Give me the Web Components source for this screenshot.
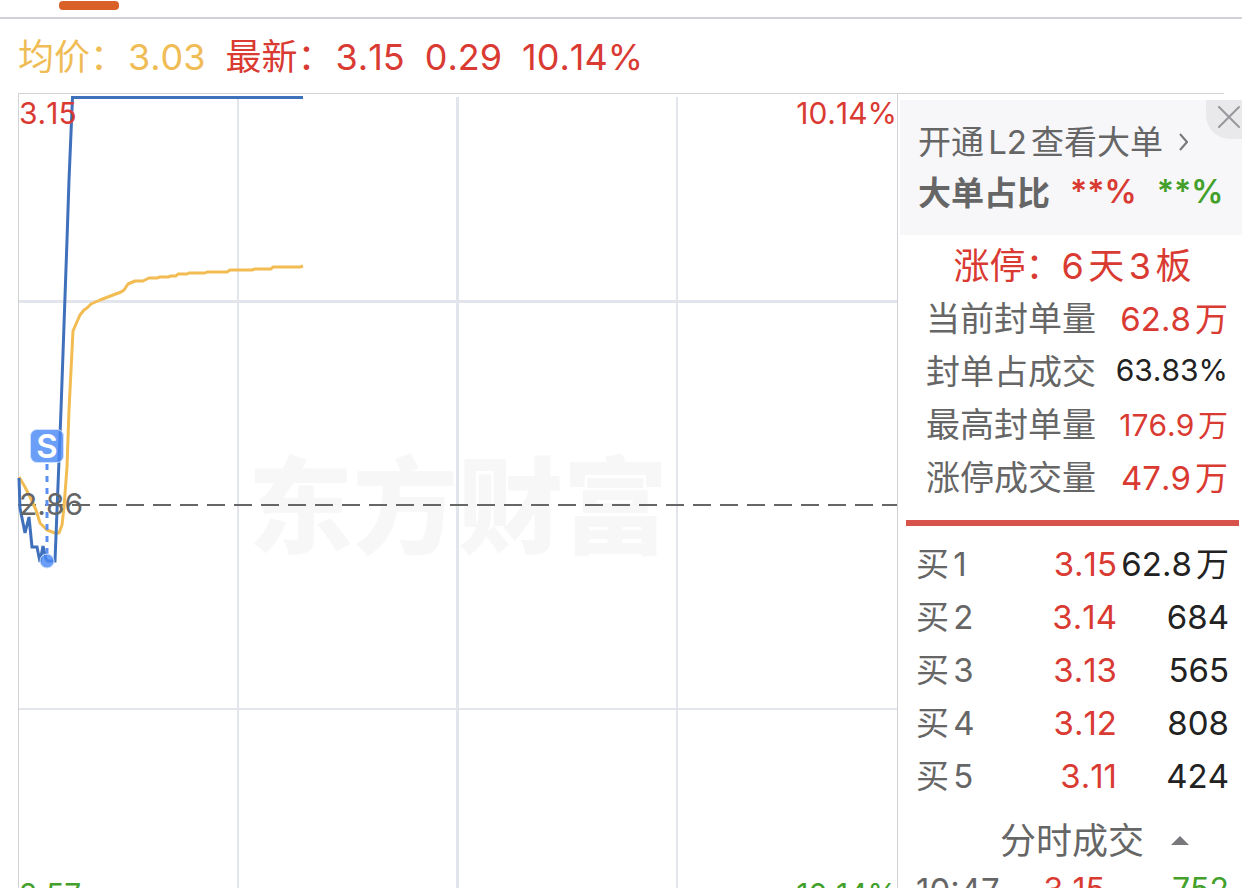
<!DOCTYPE html>
<html lang="zh-CN">
<head>
<meta charset="utf-8">
<title>分时行情</title>
<style>
  :root {
    --up: #d93a32;
    --down: #43a02a;
    --avg: #f0bc55;
    --ink: #222;
    --muted: #666;
    --line: #d1d1d6;
  }
  body {
    margin: 0;
    background: #fff;
    color: var(--ink);
    font-family: Inter, "Noto Sans CJK SC", sans-serif;
    font-kerning: none;
    text-autospace: normal;
  }
</style>
</head>
<body>
<stock-page></stock-page>

<template id="stock-page">
  <style>
    :host { display: flex; flex-direction: column; height: 100vh; overflow: hidden; }
    .tabs { box-sizing: border-box; flex: none; height: 19px; padding: 1px 59px 0; border-bottom: 2px solid var(--line); }
    .tabs i { display: block; width: 60px; height: 9px; border-radius: 4px; background: #d96027; }
    .rule { flex: none; height: 1px; margin: 0 18px; background: var(--line); }
    main { display: flex; align-items: flex-start; padding-left: 18px; }
    time-chart { flex: 1; }
    aside { flex: none; width: 344px; }
  </style>
  <div class="tabs"><i></i></div>
  <quote-bar></quote-bar>
  <div class="rule"></div>
  <main>
    <time-chart>
      <span slot="high">3.15</span>
      <span slot="high-rate">10.14%</span>
      <span slot="base">2.86</span>
      <span slot="low">2.57</span>
      <span slot="low-rate">10.14%</span>
    </time-chart>
    <aside>
      <level-promo></level-promo>
      <limit-stats></limit-stats>
      <order-book></order-book>
      <trade-list></trade-list>
    </aside>
  </main>
</template>

<template id="quote-bar">
  <style>
    :host { display: flex; box-sizing: border-box; flex: none; align-items: center; gap: 20px; height: 74px; padding: 2px 0 0 18px; font-size: 36px; line-height: 40px; color: var(--up); white-space: nowrap; }
    span { display: flex; gap: 2px; }
    .avg { color: var(--avg); }
  </style>
  <span class="avg"><span>均价：</span><span>3.03</span></span><span><span>最新：</span><span>3.15</span></span><span>0.29</span><span>10.14%</span>
</template>

<template id="time-chart">
  <style>
    :host { display: grid; position: relative; padding-top: 3px; border: solid var(--line); border-width: 0 1px; font-size: 30px; line-height: 30px; }
    svg, .mark, .label { grid-area: 1 / 1; }
    svg { display: block; width: 100%; height: 816px; overflow: visible; }
    .mark { place-self: center; padding-top: 4px; font-size: 105px; line-height: 120px; font-weight: 900; color: #f7f7f7; white-space: nowrap; }
    .label { padding: 1px 0 4px; }
    .top { align-self: start; color: var(--up); }
    .mid { align-self: center; color: var(--muted); }
    .bottom { align-self: end; color: var(--down); }
    .right { justify-self: end; }
    trade-marker { position: absolute; left: 11px; top: 335px; }
  </style>
  <div class="mark">东方财富</div>
  <svg viewBox="19 97 878 816" preserveAspectRatio="none" fill="none" stroke-linejoin="round" aria-hidden="true">
    <g stroke="#e3e5ed">
      <path stroke-width="2" d="M238 97V913M677 97V913M19 709H897"/>
      <path stroke-width="3" d="M457.500 97V913M19 301.500H897"/>
    </g>
    <path stroke="#666" stroke-width="2" stroke-dasharray="18 9" d="M18 505H897"/>
    <path stroke="#f2bc52" stroke-width="3" d="M19 477L25 487L30 497L36 510L40 523L47 530L55 533L59 533L62 525L64 507L67 467L69 410L73 331L76 324L80 315L84 310L87 308L91 304L100 300L121 292L124 290L128 284L135 281L143 281L149 278L157 278L160 277L168 277L171 276L176 276L178 274L187 274L189 273L205 273L207 272L227 272L230 270L252 270L255 269L271 269L273 267L300 267L303 266"/>
    <path stroke="#3f70bb" stroke-width="3" stroke-linejoin="miter" d="M19 478L20 508L25 533L29 517L32 547L37 547L40 562L43 546L46 559L48 561L55 561L61 410L67 240L69 180L72.500 97.500L303 97.500"/>
  </svg>
  <div class="label top"><slot name="high"></slot></div>
  <div class="label top right"><slot name="high-rate"></slot></div>
  <div class="label mid"><slot name="base"></slot></div>
  <div class="label bottom"><slot name="low"></slot></div>
  <div class="label bottom right"><slot name="low-rate"></slot></div>
  <trade-marker>S</trade-marker>
</template>

<template id="trade-marker">
  <style>
    :host { display: flex; flex-direction: column; align-items: center; width: 34px; }
    b { box-sizing: border-box; width: 34px; height: 34px; border: 1px solid #cfe0fd; border-radius: 7px; background: rgba(74, 137, 245, .82); color: #fff; font-size: 33px; line-height: 32px; font-weight: 600; text-align: center; }
    svg { display: block; }
  </style>
  <b><slot></slot></b>
  <svg width="34" height="106" viewBox="0 0 34 106" fill="none" aria-hidden="true">
    <path d="M17 1V91" stroke="#5b8ff2" stroke-width="3" stroke-dasharray="6 6"/>
    <circle cx="17" cy="98" r="7" fill="#4a89f5" fill-opacity=".82" stroke="#cfe0fd"/>
  </svg>
</template>

<template id="level-promo">
  <style>
    :host { display: block; position: relative; box-sizing: border-box; height: 135px; margin: 6px 0 0 2px; padding: 15px 18px 0; background: #f7f7fa; color: var(--muted); font-size: 33px; white-space: nowrap; }
    a { display: flex; align-items: center; gap: 16px; height: 50px; color: inherit; text-decoration: none; }
    p { display: flex; align-items: center; gap: 20px; height: 52px; margin: 0; font-weight: 600; }
    strong { font-weight: 700; }
    p span { font-size: 32px; }
    .up { color: var(--up); }
    .down { color: var(--down); }
    button { position: absolute; top: 0; right: 0; width: 36px; height: 39px; padding: 6px 2px 0 12px; border: 0; border-radius: 0 0 0 24px; background: #e9e9eb; }
    svg { display: block; }
    a svg { padding-top: 4px; }
  </style>
  <a href="#level2">开通L2查看大单<svg width="9" height="18" viewBox="0 0 9 18" fill="none" stroke="#777" stroke-width="2" aria-hidden="true"><path d="M1 1L8 9L1 17"/></svg></a>
  <p><strong>大单占比</strong><span class="up">**%</span><span class="down">**%</span></p>
  <button type="button" aria-label="关闭"><svg width="22" height="33" viewBox="0 0 22 33" fill="none" stroke="#98989c" stroke-width="2" stroke-linecap="round" aria-hidden="true"><path d="M1 1L21 21M21 1L1 21"/></svg></button>
</template>

<template id="limit-stats">
  <style>
    :host { display: block; padding: 4px 3px 11px 8px; white-space: nowrap; }
    h2 { margin: 0; height: 51px; font-size: 36px; line-height: 54px; font-weight: 400; color: var(--up); text-align: center; }
    dl { margin: 0; padding: 0 11px 0 20px; }
    div { display: flex; align-items: center; justify-content: space-between; height: 53px; }
    dt { color: var(--muted); font-size: 34px; }
    dd { margin: 0; font-size: 33px; color: var(--up); }
    .small { font-size: 30px; }
    .plain { color: var(--ink); }
    hr { height: 6px; margin: 18px 0 0; border: 0; background: #d9534d; }
  </style>
  <h2>涨停：6天3板</h2>
  <dl>
    <div><dt>当前封单量</dt><dd>62.8万</dd></div>
    <div><dt>封单占成交</dt><dd class="small plain">63.83%</dd></div>
    <div><dt>最高封单量</dt><dd class="small">176.9万</dd></div>
    <div><dt>涨停成交量</dt><dd>47.9万</dd></div>
  </dl>
  <hr>
</template>

<template id="order-book">
  <style>
    :host { display: block; padding: 0 13px 0 18px; font-size: 33px; white-space: nowrap; }
    table { width: 100%; border-collapse: collapse; table-layout: fixed; }
    th, td { height: 53px; padding: 0; line-height: 40px; font-weight: 400; text-align: right; }
    th { width: 90px; color: var(--muted); text-align: left; }
    td { color: var(--up); }
    td:last-child { width: 112px; color: var(--ink); }
  </style>
  <table>
    <tr><th scope="row">买1</th><td>3.15</td><td>62.8万</td></tr>
    <tr><th scope="row">买2</th><td>3.14</td><td>684</td></tr>
    <tr><th scope="row">买3</th><td>3.13</td><td>565</td></tr>
    <tr><th scope="row">买4</th><td>3.12</td><td>808</td></tr>
    <tr><th scope="row">买5</th><td>3.11</td><td>424</td></tr>
  </table>
</template>

<template id="trade-list">
  <style>
    :host { display: block; padding: 9px 13px 0 18px; white-space: nowrap; }
    button { display: flex; align-items: center; justify-content: center; gap: 27px; width: 100%; height: 54px; padding: 0 0 0 44px; border: 0; background: none; color: var(--muted); font: inherit; font-size: 36px; }
    button svg { padding-top: 4px; }
    table { width: 100%; border-collapse: collapse; table-layout: fixed; font-size: 32px; }
    td { height: 50px; padding: 0; line-height: 40px; text-align: right; color: var(--up); }
    td:first-child { width: 90px; color: var(--muted); font-size: 33px; text-align: left; }
    td:last-child { width: 124px; color: var(--down); }
  </style>
  <button type="button">分时成交<svg width="18" height="9" viewBox="0 0 18 9" fill="#77777c" aria-hidden="true"><path d="M0 9L9 0L18 9Z"/></svg></button>
  <table><tr><td>10:47</td><td>3.15</td><td>752</td></tr></table>
</template>

<script>
  class TemplateElement extends HTMLElement {
    constructor() {
      super();
      const template = document.getElementById(this.localName);
      this.attachShadow({ mode: 'open' }).append(template.content.cloneNode(true));
    }
  }
  customElements.define('trade-marker', class TradeMarker extends TemplateElement {});
  customElements.define('quote-bar', class QuoteBar extends TemplateElement {});
  customElements.define('time-chart', class TimeChart extends TemplateElement {});
  customElements.define('level-promo', class LevelPromo extends TemplateElement {});
  customElements.define('limit-stats', class LimitStats extends TemplateElement {});
  customElements.define('order-book', class OrderBook extends TemplateElement {});
  customElements.define('trade-list', class TradeList extends TemplateElement {});
  customElements.define('stock-page', class StockPage extends TemplateElement {});
</script>
</body>
</html>
